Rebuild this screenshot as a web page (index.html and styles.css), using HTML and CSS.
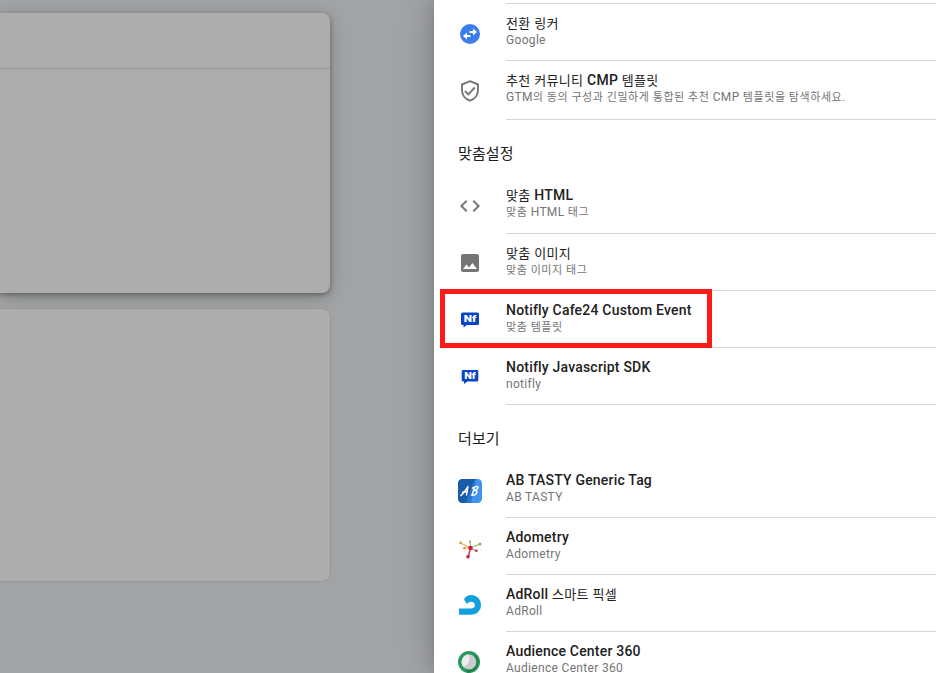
FILE: index.html
```html
<!DOCTYPE html>
<html lang="ko">
<head>
<meta charset="utf-8">
<title>태그 유형 선택</title>
<link rel="stylesheet" href="styles.css">
</head>
<body>
<div class="app">
  <main class="backdrop">
    <section class="card card-raised"><div class="card-header"></div></section>
    <section class="card card-flat"></section>
  </main>
  <aside class="panel">
    <ul class="list list-top">
      <li class="row">
        <svg class="icon" viewBox="0 0 24 24"><circle cx="12" cy="12" r="10" fill="#3b7ded"/><path d="M11.500 8.900h3.500V6.400l4 3.600-4 3.500V11h-3.500zM12.500 13H9v-2.500L5 14.100l4 3.500V15.100h3.500z" fill="#fff"/></svg>
        <div class="text"><div class="title"><span class="ko">전환 링커</span></div><div class="sub">Google</div></div>
      </li>
      <li class="row row-tall">
        <svg class="icon" viewBox="0 0 24 24"><path d="M12 2.200 20 5.500V11c0 5-3.300 9.300-8 10.700C7.300 20.300 4 16 4 11V5.500z" fill="none" stroke="#757575" stroke-width="1.900"/><path d="m7 12 3.300 3.300 6.500-6.800" fill="none" stroke="#757575" stroke-width="1.900"/></svg>
        <div class="text"><div class="title"><span class="ko">추천 커뮤니티</span> CMP <span class="ko">템플릿</span></div><div class="sub">GTM<span class="ko">의 동의 구성과 긴밀하게 통합된 추천</span> CMP <span class="ko">템플릿을 탐색하세요.</span></div></div>
      </li>
    </ul>
    <h2 class="heading">맞춤설정</h2>
    <ul class="list list-custom">
      <li class="row row-builtin">
        <svg class="icon" viewBox="0 0 24 24"><path d="M9.400 16.600 4.800 12l4.600-4.600L8 6l-6 6 6 6zm5.200 0 4.600-4.600-4.600-4.600L16 6l6 6-6 6z" fill="#757575"/></svg>
        <div class="text"><div class="title"><span class="ko">맞춤</span> HTML</div><div class="sub"><span class="ko">맞춤</span> HTML <span class="ko">태그</span></div></div>
      </li>
      <li class="row">
        <svg class="icon" viewBox="0 0 24 24"><path d="M21 19V5c0-1.100-.9-2-2-2H5c-1.100 0-2 .9-2 2v14c0 1.100.9 2 2 2h14c1.100 0 2-.9 2-2zM8.500 13.500l2.500 3.010L14.500 12l4.500 6H5z" fill="#757575"/></svg>
        <div class="text"><div class="title"><span class="ko">맞춤 이미지</span></div><div class="sub"><span class="ko">맞춤 이미지 태그</span></div></div>
      </li>
      <li class="row">
        <svg class="icon" viewBox="0 0 24 24"><path d="M4.500 4.500h15a1.500 1.500 0 0 1 1.500 1.500v9.500a1.500 1.500 0 0 1-1.500 1.500H9l-3.500 2.500V17h-1A1.500 1.500 0 0 1 3 15.500V6a1.500 1.500 0 0 1 1.500-1.500z" fill="#0b45c4"/><text class="nf" x="12" y="14" textLength="12.500" lengthAdjust="spacingAndGlyphs">Nf</text></svg>
        <div class="text"><div class="title">Notifly Cafe24 Custom Event</div><div class="sub"><span class="ko">맞춤 템플릿</span></div></div>
        <span class="highlight"></span>
      </li>
      <li class="row">
        <svg class="icon" viewBox="0 0 24 24"><path d="M5 5h14a1.300 1.300 0 0 1 1.300 1.300v8.900a1.300 1.300 0 0 1-1.300 1.300H9.300L6 19v-2.500H5a1.300 1.300 0 0 1-1.300-1.300V6.300A1.300 1.300 0 0 1 5 5z" fill="#0b45c4"/><text class="nf" x="12" y="14" textLength="11.500" lengthAdjust="spacingAndGlyphs">Nf</text></svg>
        <div class="text"><div class="title">Notifly Javascript SDK</div><div class="sub">notifly</div></div>
      </li>
    </ul>
    <h2 class="heading heading-more">더보기</h2>
    <ul class="list">
      <li class="row">
        <svg class="icon" viewBox="0 0 24 24"><rect width="24" height="24" rx="4.500" fill="#4293ee"/><path d="M4.500 0H17L8 24H4.500A4.500 4.500 0 0 1 0 19.500v-15A4.500 4.500 0 0 1 4.500 0z" fill="#1b5ca8"/><path d="m17 0 1 0L13 24H8z" fill="#2a73c9"/><path d="M2.800 16.500C5 15.500 8 10.500 10 7.500L8.500 16M4.500 13.200l5-.9M16.500 8 14 16.300M14.500 9c3-2 6.500-2 5.500 0-.7 1.500-2.500 2.200-4 2.500 4-.5 3.500 2.500 1.500 3.800-1.500 1-3 1.200-4 .8" fill="none" stroke="#fff" stroke-width="1.400" stroke-linecap="round" stroke-linejoin="round"/></svg>
        <div class="text"><div class="title">AB TASTY Generic Tag</div><div class="sub">AB TASTY</div></div>
      </li>
      <li class="row">
        <svg class="icon" viewBox="0 0.500 24 24"><path d="m11 13 7 2 6-1" fill="none" stroke="#eee9eb"/><path d="M12.500 12.500 2.500 7.500M12.500 12.500H6.500" stroke="#eda25a" stroke-width="1.200"/><path d="M12.500 12.500 12 6M12.500 12.500l9.500-4" stroke="#94bd78" stroke-width="1.200"/><path d="m12.500 12.500 6 3" stroke="#cf5868"/><path d="m12.500 12.500-2.300 9" stroke="#cc3150" stroke-width="1.500"/><g fill="#e89a43"><circle cx="2.500" cy="7.300" r="1.400"/><circle cx="6.500" cy="12.700" r="1.400"/></g><g fill="#88b568"><circle cx="12" cy="6" r="1.100"/><circle cx="22" cy="8.500" r="1.600"/></g><g fill="#c3213e"><circle cx="12.500" cy="12.500" r="2.200"/><circle cx="10" cy="21.300" r="1.800"/><circle cx="18.300" cy="15.200" r="1.200"/></g></svg>
        <div class="text"><div class="title">Adometry</div><div class="sub">Adometry</div></div>
      </li>
      <li class="row">
        <svg class="icon" viewBox="0 0 24 24"><path d="M1 21.800V15.500h11.600c2.500 0 4.300-1.200 4.300-3.300 0-2-1.700-3.500-3.900-3.500-2 0-3.500 1-4.100 2.400L6 6.500C7.400 3.600 10 2 13.200 2 18.500 2 23 6.300 23 12c0 5.700-4.300 9.800-10 9.800z" fill="#119fdd"/></svg>
        <div class="text"><div class="title">AdRoll <span class="ko">스마트 픽셀</span></div><div class="sub">AdRoll</div></div>
      </li>
      <li class="row">
        <svg class="icon" viewBox="0 0 24 24"><circle cx="11" cy="12" r="11" fill="#279b5d"/><path d="m18 5a11 11 0 0 1-9 17.800L7 18z" fill="#20834c"/><circle cx="11" cy="12" r="7.400" fill="#cbcbcb"/><path d="M11 4.600a7.400 7.400 0 0 0-5.500 12.300C11 15 12.500 9.500 11 4.600z" fill="#ededed"/></svg>
        <div class="text"><div class="title">Audience Center 360</div><div class="sub">Audience Center 360</div></div>
      </li>
    </ul>
  </aside>
</div>
</body>
</html>
```
FILE: styles.css
```css
* { box-sizing: border-box; }
body {
  margin: 0;
  height: 673px;
  overflow: hidden;
  font-family: Roboto, "Noto Sans CJK KR", sans-serif;
  background: #a1a3a4;
}
.app { display: flex; height: 673px; }
.backdrop { width: 434px; padding-top: 13px; }
.card { width: 331px; background: #adadad; }
.card-raised {
  width: 330px;
  height: 280px;
  border-radius: 0 8px 8px 0;
  box-shadow: 0 2px 5px rgba(0, 0, 0, .3), 0 4px 18px rgba(0, 0, 0, .2);
}
.card-header { height: 56px; border-bottom: 1px solid #94959b; }
.card-flat {
  height: 274px;
  margin-top: 15px;
  border: 1px solid #96979c;
  border-left: 0;
  border-radius: 0 9px 9px 0;
}
.panel {
  position: relative;
  flex: 1;
  background: #fff;
  box-shadow: 0 0 12px rgba(0, 0, 0, .14), 0 0 36px rgba(0, 0, 0, .2);
}
.list { margin: 0; padding: 0 0 0 24px; list-style: none; }
.list-top { padding-top: 3px; }
.list-top::before {
  content: "";
  display: block;
  height: 1px;
  margin-left: 48px;
  background: #d5d5d5;
}
.row { position: relative; display: flex; height: 57px; }
.icon { flex: none; width: 24px; height: 24px; margin: 18px 24px 0 0; }
.list-custom .icon { margin-top: 17px; }
.text { flex: 1; padding-top: 11px; border-bottom: 1px solid #d5d5d5; white-space: nowrap; }
.row-builtin .text { padding-top: 10px; }
.row-tall { height: 59px; }
.title {
  height: 17px;
  line-height: 17px;
  font-size: 14px;
  font-weight: 500;
  letter-spacing: .2px;
  color: #212121;
}
.sub {
  height: 16px;
  line-height: 16px;
  font-size: 12px;
  letter-spacing: .32px;
  color: #757575;
}
.ko { font-weight: 400; }
.title .ko { font-size: 13px; letter-spacing: .35px; }
.sub .ko { font-size: 11px; letter-spacing: .56px; }
.heading {
  height: 57px;
  margin: 0;
  padding: 22px 0 0 24px;
  line-height: 24px;
  font-size: 15px;
  font-weight: 400;
  letter-spacing: .1px;
  color: #212121;
}
.heading-more { height: 56px; }
.nf { font: 900 9px Roboto, sans-serif; fill: #fff; text-anchor: middle; }
.highlight {
  position: absolute;
  top: -2px;
  left: -18px;
  width: 272px;
  height: 59px;
  border: 5px solid #fb1d15;
}
```
